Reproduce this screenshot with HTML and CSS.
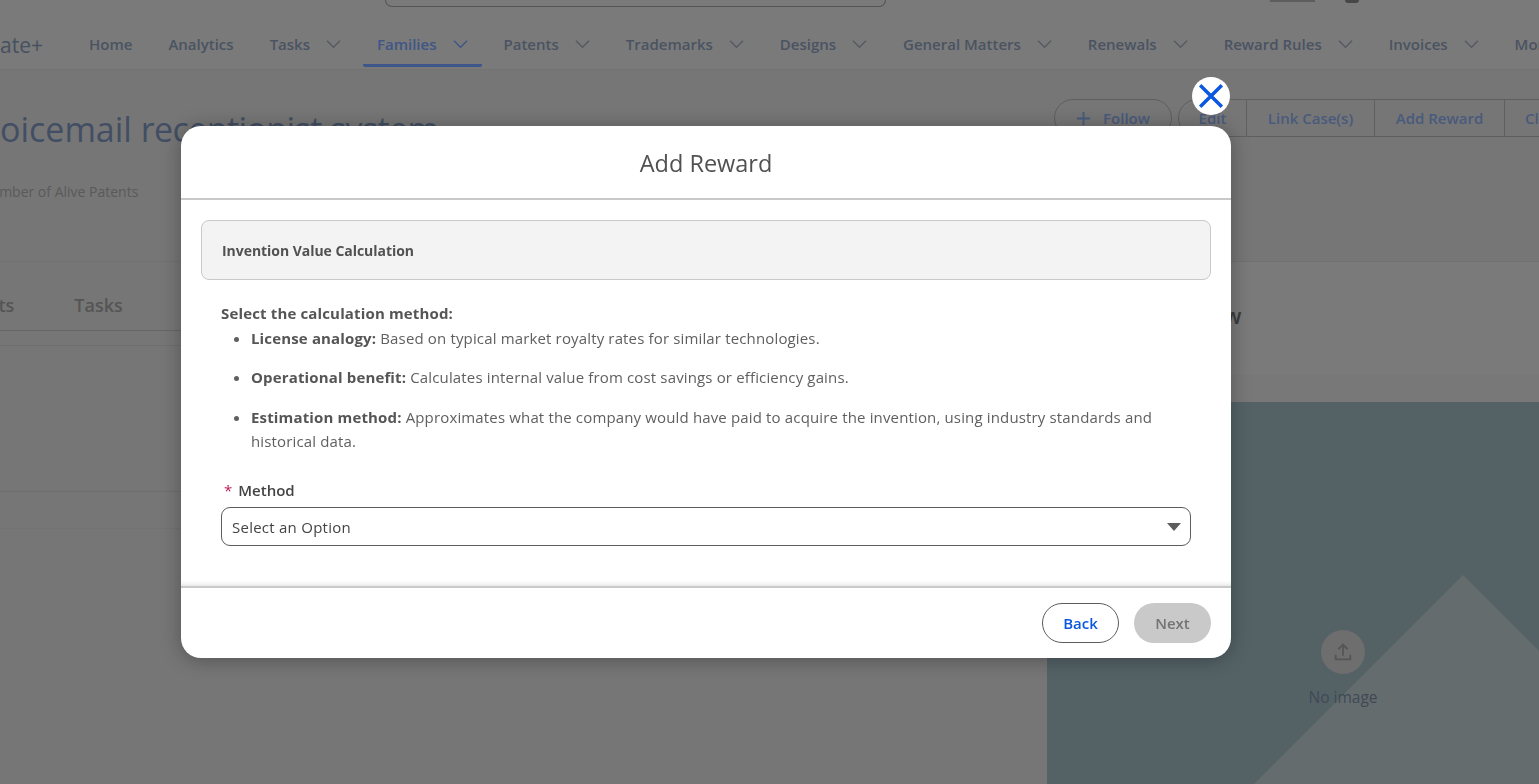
FILE: index.html
```html
<!DOCTYPE html>
<html lang="en">
<head>
<meta charset="utf-8">
<title>Add Reward</title>
<link rel="stylesheet" href="styles.css">
</head>
<body>
<div class="page">
  <header class="header">
    <div class="topbar">
      <div class="search"></div>
      <div class="top-icons"><span class="ti ti-a"></span><span class="ti ti-b"></span></div>
    </div>
    <nav class="nav">
      <span class="logo">ate+</span>
      <a class="nav-item">Home</a>
      <a class="nav-item">Analytics</a>
      <a class="nav-item">Tasks<svg class="chev" viewBox="0 0 16 10"><path d="M1 1.5 8 8.5 15 1.5"/></svg></a>
      <a class="nav-item active">Families<svg class="chev" viewBox="0 0 16 10"><path d="M1 1.5 8 8.5 15 1.5"/></svg></a>
      <a class="nav-item">Patents<svg class="chev" viewBox="0 0 16 10"><path d="M1 1.5 8 8.5 15 1.5"/></svg></a>
      <a class="nav-item">Trademarks<svg class="chev" viewBox="0 0 16 10"><path d="M1 1.5 8 8.5 15 1.5"/></svg></a>
      <a class="nav-item">Designs<svg class="chev" viewBox="0 0 16 10"><path d="M1 1.5 8 8.5 15 1.5"/></svg></a>
      <a class="nav-item">General Matters<svg class="chev" viewBox="0 0 16 10"><path d="M1 1.5 8 8.5 15 1.5"/></svg></a>
      <a class="nav-item">Renewals<svg class="chev" viewBox="0 0 16 10"><path d="M1 1.5 8 8.5 15 1.5"/></svg></a>
      <a class="nav-item">Reward Rules<svg class="chev" viewBox="0 0 16 10"><path d="M1 1.5 8 8.5 15 1.5"/></svg></a>
      <a class="nav-item">Invoices<svg class="chev" viewBox="0 0 16 10"><path d="M1 1.5 8 8.5 15 1.5"/></svg></a>
      <a class="nav-item">More</a>
    </nav>
  </header>
  <section class="title-row">
    <div class="title-block">
      <h1 class="case-title">voicemail <span class="word-b">receptionist system</span></h1>
      <p class="case-meta">Number of Alive Patents</p>
    </div>
    <div class="actions">
      <button class="btn-follow"><svg class="plus" viewBox="0 0 16 16"><path d="M8 1V15M1 8H15"/></svg>Follow</button>
      <div class="btn-group">
        <button class="grp first">Edit</button>
        <button class="grp link">Link Case(s)</button>
        <button class="grp reward">Add Reward</button>
        <button class="grp clone">Clone</button>
      </div>
    </div>
  </section>
  <section class="content">
    <div class="left">
      <div class="tabs"><span class="tab">Patents</span><span class="tab">Tasks</span></div>
      <div class="sub-bar"></div>
      <div class="empty-row"></div>
      <div class="empty-row-2"></div>
    </div>
    <aside class="right">
      <div class="right-head">Preview</div>
      <div class="right-gap"></div>
      <div class="preview">
        <svg class="mountain" viewBox="0 0 492 382"><path d="M416 173 625 382H207Z" class="m"/></svg>
        <div class="noimage">
          <span class="upload"><svg viewBox="0 0 24 24" width="22" height="22"><path d="M12 16V4M7 9l5-5 5 5M4 15v5h16v-5"/></svg></span>
          <span class="noimage-text">No image</span>
        </div>
      </div>
    </aside>
  </section>
</div>

<div class="overlay"></div>

<div class="modal">
  <button class="close" aria-label="Close"><svg viewBox="0 0 24 24" width="26" height="26"><path d="M2 2 22 22M22 2 2 22"/></svg></button>
  <div class="modal-head">Add Reward</div>
  <div class="modal-body">
    <div class="section-title">Invention Value Calculation</div>
    <div class="copy">
      <p class="lead">Select the calculation method:</p>
      <ul class="methods">
        <li><b>License analogy:</b> Based on typical market royalty rates for similar technologies.</li>
        <li><b>Operational benefit:</b> Calculates internal value from cost savings or efficiency gains.</li>
        <li><b>Estimation method:</b> Approximates what the company would have paid to acquire the invention, using industry standards and historical data.</li>
      </ul>
    </div>
    <div class="field">
      <label class="field-label"><span class="req">*</span>Method</label>
      <div class="select"><span>Select an Option</span><span class="caret"></span></div>
    </div>
  </div>
  <div class="modal-foot">
    <button class="btn back">Back</button>
    <button class="btn next">Next</button>
  </div>
</div>
</body>
</html>
```
FILE: styles.css
```css
* { box-sizing: border-box; }
html, body { margin: 0; height: 100%; overflow: hidden; }
body { font-family: "Open Sans", "Noto Sans", sans-serif; background: #c5c5c5; color: #444; }
button { font-family: inherit; }

.page { width: 1539px; height: 784px; overflow: hidden; background: #c5c5c5; }

.header { height: 70px; background: #cbcbcb; border-bottom: 1px solid #c0c0c0; }
.topbar { height: 27px; display: flex; }
.search { flex: none; width: 501px; height: 7px; margin-left: 385px; border: 1px solid #8c8c8c; border-top: 0; border-radius: 0 0 10px 10px; }
.top-icons { display: flex; gap: 30px; margin-left: 384px; }
.ti { height: 2px; background: #9c9c9c; }
.ti-a { width: 45px; }
.ti-b { width: 14px; height: 3px; background: #777; border-radius: 0 0 7px 7px; }

.nav { display: flex; align-items: flex-start; gap: 8px; height: 42px; margin-left: -38px; }
.logo { flex: none; font-size: 21px; line-height: 37px; color: #76889f; width: 105px; white-space: nowrap; padding-left: 38px; }
.nav-item { flex: none; display: flex; align-items: center; height: 40px; padding: 0 14px 3px; font-size: 15px; font-weight: 600; color: #7c8ba3; white-space: nowrap; border-bottom: 3px solid transparent; }
.nav-item.active { color: #6a90e0; border-bottom-color: #6a90e8; border-radius: 2px; }
.chev { width: 15px; height: 10px; margin-left: 16px; fill: none; stroke: #8e96a2; stroke-width: 1.5; }
.active .chev { stroke: #6a90e0; }

.title-row { display: flex; justify-content: space-between; height: 192px; border-bottom: 1px solid #bdbdbd; background: #c5c5c5; }
.title-block { flex: none; margin-left: -17px; padding-top: 36px; }
.case-title { margin: 0; font-size: 34px; font-weight: 400; line-height: 46px; color: #6f83a6; }
.word-b { letter-spacing: -.6px; }
.case-meta { margin: 30px 0 0 -3px; font-size: 14px; color: #969696; }
.actions { flex: none; display: flex; gap: 6px; padding-top: 29px; margin-right: -95px; align-items: flex-start; }
.btn-follow, .grp { height: 38px; font-size: 15px; font-weight: 600; color: #7a97d0; background: transparent; border: 1px solid #9e9e9e; }
.btn-follow { width: 118px; border-radius: 19px; display: flex; align-items: center; justify-content: center; gap: 12px; }
.plus { width: 15px; height: 15px; }
.plus path { fill: none; stroke: #7a97d0; stroke-width: 2; }
.btn-group { display: flex; }
.grp { flex: none; width: 129px; border-left: 0; }
.grp.first { width: 69px; border-left: 1px solid #9e9e9e; border-radius: 19px 0 0 19px; }
.grp.link { width: 128px; }
.grp.reward { width: 130px; }
.grp.clone { text-align: left; padding-left: 20px; }

.content { display: flex; height: 522px; }
.left { width: 1047px; flex: none; }
.tabs { display: flex; gap: 60px; margin-left: -52px; height: 69px; align-items: flex-end; padding-bottom: 13px; border-bottom: 1px solid #aaa; font-size: 18px; color: #8e8e8e; font-weight: 600; }
.sub-bar { height: 15px; border-bottom: 1px solid #b7b7b7; }
.empty-row { height: 146px; border-bottom: 1px solid #b7b7b7; }
.empty-row-2 { height: 37px; border-bottom: 1px solid #bfbfbf; }
.right { flex: 1; display: flex; flex-direction: column; }
.right-head { height: 113px; padding: 40px 0 0 114px; font-size: 21px; font-weight: 600; color: #646464; background: #cbcbcb; }
.right-gap { height: 27px; background: #c9c9c9; }
.preview { flex: 1; position: relative; background: #8ca3aa; overflow: hidden; }
.mountain { position: absolute; inset: 0; width: 100%; height: 100%; }
.m { fill: #a8b5b8; }
.noimage { position: absolute; left: 274px; top: 228px; width: 44px; display: flex; flex-direction: column; align-items: center; }
.upload { width: 44px; height: 44px; border-radius: 50%; background: #b7b7b7; display: flex; align-items: center; justify-content: center; }
.upload path { fill: none; stroke: #8e8e8e; stroke-width: 2; }
.noimage-text { margin-top: 12px; font-size: 15.5px; color: #697b8e; white-space: nowrap; }

.overlay { position: fixed; inset: 0; background: rgba(0, 0, 0, .4); backdrop-filter: blur(.7px); }

.modal { position: fixed; left: 181px; top: 126px; width: 1050px; height: 532px; background: #fff; border-radius: 20px; display: flex; flex-direction: column; box-shadow: 0 2px 20px rgba(0, 0, 0, .3); }
.close { position: absolute; right: 1px; top: -49px; width: 38px; height: 38px; padding: 0; border: 0; border-radius: 50%; background: #fff; display: flex; align-items: center; justify-content: center; }
.close path { fill: none; stroke: #0b57e0; stroke-width: 3.2; }
.modal-head { height: 74px; flex: none; border-bottom: 2px solid #c9c9c9; text-align: center; font-size: 23.5px; line-height: 74px; color: #515151; }
.modal-body { flex: 1; padding: 20px 20px 0; box-shadow: inset 0 -6px 6px -6px rgba(0, 0, 0, .18); }
.section-title { height: 60px; padding-left: 20px; line-height: 60px; background: #f3f3f3; border: 1px solid #c9c9c9; border-radius: 8px; font-size: 14px; font-weight: 700; color: #515151; letter-spacing: -.04px; }
.copy { padding: 23px 20px 0; font-size: 15px; line-height: 24px; color: #5f5f5f; letter-spacing: .15px; }
.lead { margin: 0; font-weight: 700; line-height: 20px; color: #555; }
.methods { margin: 0; padding: 0 0 0 30px; }
.methods b { color: #555; }
.methods li { margin-top: 3px; margin-bottom: 15px; }
.methods li + li { margin-top: 0; }
.methods li:last-child { padding-top: 1px; }
.field { padding: 12px 20px 0; }
.field-label { display: block; height: 27px; font-size: 15px; font-weight: 600; color: #444; line-height: 20px; padding-left: 3px; }
.req { color: #c2185b; margin-right: 6px; font-weight: 400; }
.select { height: 39px; border: 1px solid #5c5c5c; border-radius: 9px; display: flex; align-items: center; justify-content: space-between; padding: 0 9px 0 10px; font-size: 15px; letter-spacing: .25px; color: #444; }
.caret { width: 0; height: 0; border: 7px solid transparent; border-top: 8px solid #5c5c5c; border-bottom: 0; }
.modal-foot { height: 72px; flex: none; border-top: 2px solid #c9c9c9; display: flex; justify-content: flex-end; gap: 15px; padding: 15px 20px 0; }
.btn { width: 77px; height: 40px; border-radius: 20px; font-size: 15px; font-weight: 600; }
.back { background: #fff; border: 1px solid #5c5c5c; color: #0b57e0; }
.next { background: #c9c9c9; border: 0; color: #747474; }
```
